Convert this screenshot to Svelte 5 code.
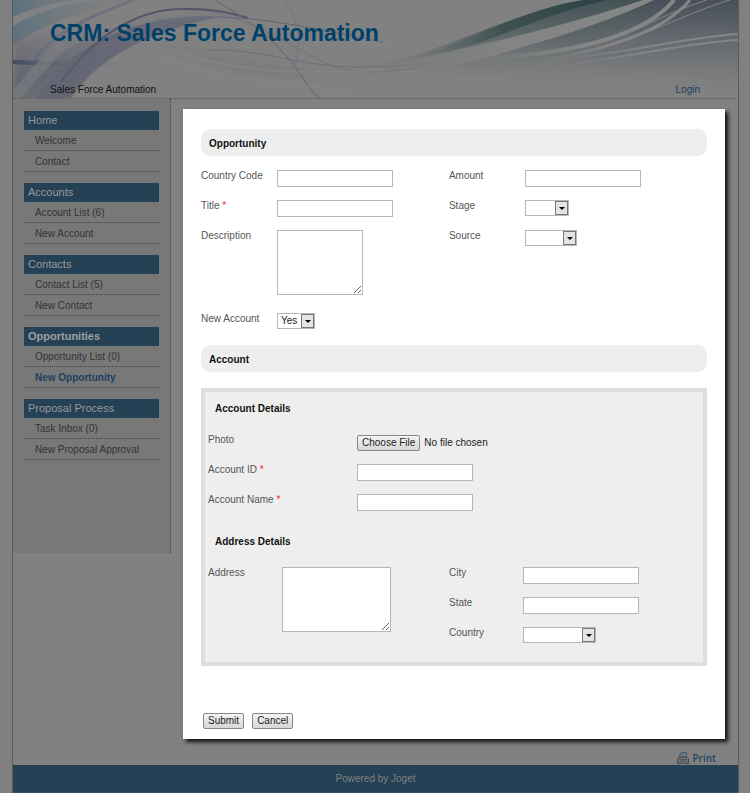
<script lang="ts">
  type Field = {
    id: string;
    label: string;
    kind: 'text' | 'area' | 'select' | 'file';
    required?: boolean;
    size?: string;
    options?: string[];
  };

  const menu = [
    { title: 'Home', items: ['Welcome', 'Contact'] },
    { title: 'Accounts', items: ['Account List (6)', 'New Account'] },
    { title: 'Contacts', items: ['Contact List (5)', 'New Contact'] },
    { title: 'Opportunities', items: ['Opportunity List (0)', 'New Opportunity'] },
    { title: 'Proposal Process', items: ['Task Inbox (0)', 'New Proposal Approval'] }
  ];
  const current = { title: 'Opportunities', item: 'New Opportunity' };

  const opportunityLeft: Field[] = [
    { id: 'country-code', label: 'Country Code', kind: 'text' },
    { id: 'title', label: 'Title', kind: 'text', required: true },
    { id: 'description', label: 'Description', kind: 'area' },
    { id: 'new-account', label: 'New Account', kind: 'select', size: 'xs', options: ['Yes', 'No'] }
  ];
  const opportunityRight: Field[] = [
    { id: 'amount', label: 'Amount', kind: 'text' },
    { id: 'stage', label: 'Stage', kind: 'select', size: 'sm', options: [''] },
    { id: 'source', label: 'Source', kind: 'select', size: 'md', options: [''] }
  ];
  const account: Field[] = [
    { id: 'photo', label: 'Photo', kind: 'file' },
    { id: 'account-id', label: 'Account ID', kind: 'text', required: true },
    { id: 'account-name', label: 'Account Name', kind: 'text', required: true }
  ];
  const addressLeft: Field[] = [{ id: 'address', label: 'Address', kind: 'area', size: 'wide' }];
  const addressRight: Field[] = [
    { id: 'city', label: 'City', kind: 'text' },
    { id: 'state', label: 'State', kind: 'text' },
    { id: 'country', label: 'Country', kind: 'select', size: 'lg', options: [''] }
  ];
</script>

{#snippet fields(list: Field[])}
  <div class="fields">
    {#each list as f (f.id)}
      <div class="field">
        <label for={f.id}>{f.label}{#if f.required}&nbsp;<span class="req">*</span>{/if}</label>
        {#if f.kind === 'area'}
          <textarea id={f.id} class={f.size}></textarea>
        {:else if f.kind === 'select'}
          <select id={f.id} class={f.size}>
            {#each f.options ?? [] as o}<option>{o}</option>{/each}
          </select>
        {:else if f.kind === 'file'}
          <input id={f.id} type="file" />
        {:else}
          <input id={f.id} type="text" />
        {/if}
      </div>
    {/each}
  </div>
{/snippet}

<div class="page">
  <header>
    <svg class="banner" viewBox="0 0 725 98" preserveAspectRatio="none" aria-hidden="true">
      <defs>
        <linearGradient id="sky" x1="0" y1="0" x2="1" y2="0">
          <stop offset="0" stop-color="#5d717d" />
          <stop offset="1" stop-color="#808080" stop-opacity="0" />
        </linearGradient>
        <linearGradient id="violet" x1="0" y1="1" x2="1" y2="0">
          <stop offset="0" stop-color="#5a5d6c" />
          <stop offset="1" stop-color="#7c7d82" stop-opacity="0" />
        </linearGradient>
        <linearGradient id="dusk" x1="0" y1="0" x2="1" y2="0">
          <stop offset="0" stop-color="#454d5e" />
          <stop offset="1" stop-color="#747680" stop-opacity="0" />
        </linearGradient>
        <linearGradient id="teal" x1="0.55" y1="0" x2="0.4" y2="1">
          <stop offset="0" stop-color="#465458" />
          <stop offset="0.45" stop-color="#62696c" />
          <stop offset="1" stop-color="#808080" stop-opacity="0" />
        </linearGradient>
        <linearGradient id="slate" x1="0" y1="0" x2="0" y2="1">
          <stop offset="0" stop-color="#484e59" />
          <stop offset="0.5" stop-color="#696c73" />
          <stop offset="1" stop-color="#808080" stop-opacity="0" />
        </linearGradient>
        <linearGradient id="edge" x1="0" y1="0" x2="1" y2="0">
          <stop offset="0" stop-color="#6c7575" stop-opacity="0" />
          <stop offset="0.5" stop-color="#40524f" />
          <stop offset="1" stop-color="#2b4144" />
        </linearGradient>
        <linearGradient id="ray" x1="0" y1="0" x2="1" y2="0">
          <stop offset="0" stop-color="#828282" stop-opacity="0" />
          <stop offset="0.5" stop-color="#848484" />
          <stop offset="1" stop-color="#858686" />
        </linearGradient>
        <filter id="soft" x="-10%" y="-30%" width="120%" height="160%"><feGaussianBlur stdDeviation="3" /></filter>
      </defs>

      <path d="M0 0H135C85 6 40 18 0 45Z" fill="url(#sky)" />
      <path d="M0 26C35 5 72 0 110 0H62C35 3 15 10 0 17Z" fill="#808384" />
      <path d="M0 38C50 26 90 28 130 40L60 72 0 90Z" fill="url(#violet)" filter="url(#soft)" />
      <path d="M0 60C35 60 75 65 120 61V64C75 69 35 66 0 64Z" fill="url(#dusk)" />
      <path d="M0 90C45 50 100 10 225 6L300 2C180 22 105 32 57 98H0Z" fill="url(#violet)" opacity="0.7" />
      <path d="M0 98V91C25 60 48 35 84 12C58 45 33 68 8 98Z" fill="#7b7c80" opacity="0.7" />
      <path d="M23 98C62 46 105 18 205 17C140 31 90 53 58 98Z" fill="#626473" opacity="0.75" />
      <path d="M145 46C230 48 285 77 350 68C300 84 225 80 150 50Z" fill="url(#violet)" opacity="0.3" filter="url(#soft)" />
      <g fill="none">
        <path d="M48 82C82 34 124 7 176 9C215 11 248 27 300 57S410 63 455 60" stroke="#5e6070" stroke-width="1" opacity="0.4" />
        <path d="M48 82C80 38 122 9 170 9C200 8 220 14 235 18" stroke="#53566a" stroke-width="2" />
        <path d="M36 98C67 46 115 20 180 17C250 15 305 30 370 42" stroke="#616476" stroke-width="1" />
        <path d="M120 0C88 14 48 24 19 62" stroke="#65697a" stroke-width="3" opacity="0.65" />
        <path d="M202 0C231 17 258 36 281 65C289 77 297 89 305 98" stroke="#606374" stroke-width="1" />
        <path d="M272 0C288 25 288 49 280 70" stroke="#727481" stroke-width="2" opacity="0.5" />
        <path d="M195 50C250 48 285 67 345 67C390 67 420 64 455 58" stroke="#606473" stroke-width="1" opacity="0.65" />
        <path d="M165 52C220 70 275 76 365 70M150 55C210 87 280 78 340 94" stroke="#868686" stroke-width="2" opacity="0.7" />
        <path d="M230 20C280 24 325 39 376 47" stroke="#878787" stroke-width="2" opacity="0.5" />
      </g>

      <path d="M350 67C430 55 488 14 575 0H725V90C610 98 475 73 350 67Z" fill="url(#teal)" />
      <path d="M520 70C600 48 620 15 640 0H725V82C650 84 590 75 520 70Z" fill="url(#slate)" opacity="0.8" />
      <path d="M385 62C445 49 500 11 570 0H595C515 17 465 53 385 62Z" fill="url(#edge)" />
      <path d="M350 68C460 49 558 24 630 0H641C573 32 500 49 465 60C425 70 388 66 350 68Z" fill="url(#ray)" />
      <g fill="none" stroke="url(#ray)">
        <path d="M455 59C570 55 635 32 661 0" stroke-width="4" />
        <path d="M520 62C610 47 654 27 677 0" stroke-width="3" />
        <path d="M570 49C630 31 646 15 694 0" stroke-width="1" />
        <path d="M555 58C620 43 675 12 717 0" stroke-width="1" />
        <path d="M535 60C610 55 665 38 725 34M550 65C620 57 670 43 725 40" stroke-width="2" />
      </g>
    </svg>
    <h1>CRM: Sales Force Automation</h1>
    <div class="header-bar">
      <span>Sales Force Automation</span>
      <a class="login" href="#login">Login</a>
    </div>
  </header>

  <div class="body">
    <nav>
      {#each menu as group (group.title)}
        <section>
          <h2 class:current={group.title === current.title}>{group.title}</h2>
          <ul>
            {#each group.items as item (item)}
              <li><a href="#menu" class:current={item === current.item}>{item}</a></li>
            {/each}
          </ul>
        </section>
      {/each}
    </nav>

    <main>
      <form class="panel" onsubmit={(e) => e.preventDefault()}>
        <h3 class="section-title">Opportunity</h3>
        <div class="columns">
          {@render fields(opportunityLeft)}
          {@render fields(opportunityRight)}
        </div>

        <h3 class="section-title">Account</h3>
        <div class="subform">
          <h4>Account Details</h4>
          <div class="wide-labels">
            {@render fields(account)}
          </div>
          <h4>Address Details</h4>
          <div class="columns">
            {@render fields(addressLeft)}
            {@render fields(addressRight)}
          </div>
        </div>

        <div class="actions">
          <button type="submit">Submit</button>
          <button type="button">Cancel</button>
        </div>
      </form>
    </main>
  </div>

  <div class="print-row">
    <a href="#print">
      <svg width="12" height="12" viewBox="0 0 12 12" aria-hidden="true">
        <path d="M2.5 6V2.500l2-2h5V6" fill="#6d7a83" stroke="#4b5c69" />
        <path d="M4.500 1v2H3M4 4.500h4" fill="none" stroke="#5d7180" />
        <path d="M.5 6.500l1.500-1.500h8l1.500 1.500v5H.5z" fill="#757575" stroke="#484848" />
        <path d="M2 7.500h8" stroke="#555" />
        <path d="M3 9h6v2.500H3z" fill="#66737c" stroke="#505a61" />
      </svg>
      Print
    </a>
  </div>
  <footer>Powered by Joget</footer>
</div>

<style>
  :global(body) { margin: 0; background: #808080; }
  .page { margin: 0 11px 0 12px; border: 1px solid #5a5a5a; border-width: 0 1px; background: #818181; font-family: "Liberation Sans", Arial, sans-serif; font-size: 10px; line-height: 12px; color: #333; }
  a { color: inherit; text-decoration: none; }
  h1, h2, h3, h4, ul { margin: 0; padding: 0; }

  header { position: relative; display: flex; flex-direction: column; justify-content: space-between; height: 99px; box-sizing: border-box; padding: 19px 38px 1px 37px; border-bottom: 1px dotted #555; }
  .banner { position: absolute; inset: 0; width: 100%; height: 100%; }
  h1 { position: relative; font-size: 23px; line-height: 28px; color: #004169; }
  .header-bar { position: relative; display: flex; justify-content: space-between; color: #111; line-height: 14px; }
  .login { color: #213f61; }

  .body { display: flex; align-items: flex-start; }
  nav { flex: none; width: 135px; display: flex; flex-direction: column; gap: 11px; padding: 12px 11px 93px; background: #787878; border-right: 1px dotted #444; }
  h2 { padding-left: 4px; background: #244156; color: #999; font-size: 11px; line-height: 19px; font-weight: 400; }
  h2.current { font-weight: 700; color: #a0a0a0; }
  ul { list-style: none; }
  li { padding: 2px 0 0 11px; line-height: 18px; border-bottom: 1px dotted #444; }
  li .current { font-weight: 700; color: #213f61; }

  main { flex: 1; min-width: 0; padding: 10px 13px 12px 12px; }
  .panel { padding: 20px 18px 10px; background: #fff; box-shadow: 3px 3px 4px #111; }
  .section-title { padding: 2px 8px 0; background: #eee; border-radius: 9px; font-size: 10px; line-height: 25px; color: #111; }
  .columns { display: grid; grid-template-columns: 49% 51%; }
  .panel > .columns { padding: 13px 0 3px; }

  .field { display: flex; align-items: flex-start; min-height: 30px; color: #555; }
  .field:has(textarea) { min-height: 83px; }
  label { flex: none; width: 76px; padding-top: 1px; }
  .subform label { width: 74px; }
  .subform .wide-labels label { width: 149px; }
  .req { color: #f22; }

  input, textarea, select, button { font: inherit; }
  input[type="text"], textarea, select { box-sizing: border-box; margin: 0; border: 1px solid #b5b5bd; border-radius: 0; background-color: #fff; color: #222; }
  input[type="text"] { width: 116px; height: 17px; margin-top: 1px; padding: 0 2px; }
  textarea { width: 86px; height: 65px; margin-top: 1px; }
  textarea.wide { width: 109px; }
  select {
    appearance: none; height: 16px; margin-top: 1px; padding: 0 14px 0 3px; line-height: 14px;
    background: #fff url("data:image/svg+xml,%3Csvg xmlns='http://www.w3.org/2000/svg' width='13' height='14'%3E%3Crect x='.5' y='.5' width='12' height='13' fill='%23e4e4e4' stroke='%23777'/%3E%3Cpath d='M4 6h6L7 9z' fill='%23000'/%3E%3C/svg%3E") right center no-repeat;
  }
  .xs { width: 38px; }
  .sm { width: 44px; }
  .md { width: 52px; }
  .lg { width: 73px; }
  input[type="file"] { color: #222; margin-top: 2px; }
  button, input::file-selector-button { height: 16px; padding: 0 4px; border: 1px solid #888; border-radius: 2px; background: linear-gradient(#f4f4f4, #d6d6d6); color: #222; font: inherit; line-height: 14px; }

  .subform { margin-top: 16px; padding: 0 3px 6px; border: 4px solid #dedede; background: #eee; }
  h4 { padding: 11px 0 18px 7px; font-size: 10px; color: #111; }
  .wide-labels + h4 { padding-top: 13px; }

  .actions { display: flex; gap: 8px; padding: 47px 2px 0; }

  .print-row { display: flex; justify-content: flex-end; padding: 0 22px 0 0; }
  .print-row a { display: flex; align-items: center; gap: 3px; height: 14px; font-family: "Open Sans", sans-serif; font-weight: 600; color: #1f4560; }
  footer { background: #244156; border-bottom: 1px solid #3c5465; color: #808080; line-height: 27px; text-align: center; }
</style>
